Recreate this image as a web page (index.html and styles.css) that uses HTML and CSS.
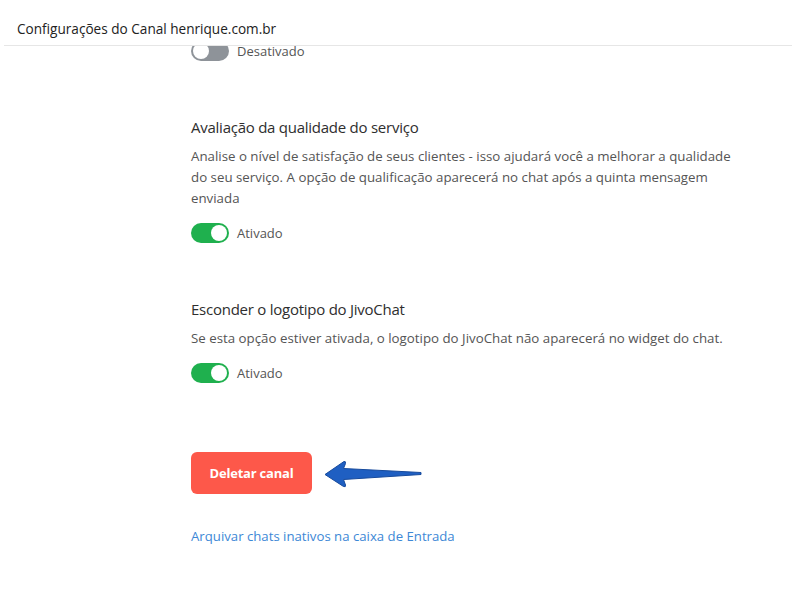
FILE: index.html
```html
<!DOCTYPE html>
<html lang="pt-BR">
<head>
<meta charset="utf-8">
<title>Configurações do Canal</title>
<link rel="stylesheet" href="styles.css">
</head>
<body>
<header class="topbar">
  <h1 class="topbar-title">Configurações do Canal henrique.com.br</h1>
</header>
<main class="content">
  <div class="toggle-row">
    <span class="switch switch-off"><span class="knob"></span></span>
    <span class="toggle-label">Desativado</span>
  </div>

  <section class="setting">
    <h2 class="setting-title">Avaliação da qualidade do serviço</h2>
    <p class="setting-desc">Analise o nível de satisfação de seus clientes - isso ajudará você a melhorar a qualidade do seu serviço. A opção de qualificação aparecerá no chat após a quinta mensagem enviada</p>
    <div class="toggle-row">
      <span class="switch switch-on"><span class="knob"></span></span>
      <span class="toggle-label">Ativado</span>
    </div>
  </section>

  <section class="setting">
    <h2 class="setting-title">Esconder o logotipo do JivoChat</h2>
    <p class="setting-desc">Se esta opção estiver ativada, o logotipo do JivoChat não aparecerá no widget do chat.</p>
    <div class="toggle-row">
      <span class="switch switch-on"><span class="knob"></span></span>
      <span class="toggle-label">Ativado</span>
    </div>
  </section>

  <div class="danger-row">
    <button class="btn-delete" type="button">Deletar canal</button>
    <svg class="arrow" width="100" height="30" viewBox="0 0 100 30" aria-hidden="true">
      <path d="M1 14.5 L20 1.5 Q22 1 21.5 3.5 L19.5 8.5 L97 12.5 L97 14.5 L19.5 19.5 L21.5 25 Q22 27.5 19.5 26.5 Z" fill="#1f5fc2" stroke="#174a9c" stroke-width="1" stroke-linejoin="round"/>
    </svg>
  </div>

  <a class="archive-link" href="#">Arquivar chats inativos na caixa de Entrada</a>
</main>
</body>
</html>
```
FILE: styles.css
```css
* { box-sizing: border-box; }
html, body { margin: 0; padding: 0; background: #ffffff; }
body {
  font-family: "Open Sans", "Noto Sans", "Liberation Sans", sans-serif;
  color: #333;
  width: 801px;
  height: 594px;
  overflow: hidden;
}
.topbar {
  position: sticky;
  top: 0;
  z-index: 2;
  height: 46px;
  background: #fff;
  margin: 0 9px 0 4px;
  border-bottom: 1px solid #e6e6e6;
  padding: 20px 0 0 13px;
}
.topbar-title {
  margin: 0;
  font-size: 13.6px;
  font-weight: 400;
  line-height: 18px;
  color: #222;
}
.content {
  position: relative;
  z-index: 1;
  margin-top: -5px;
  padding-left: 191px;
  width: 741px;
}
.toggle-row {
  display: flex;
  align-items: center;
  gap: 8px;
  height: 20px;
}
.switch {
  width: 38px;
  height: 20px;
  border-radius: 10px;
  display: flex;
  align-items: center;
  padding: 2px;
}
.switch-on { background: #1fb04e; justify-content: flex-end; }
.switch-off { background: #8e9399; justify-content: flex-start; }
.knob {
  width: 16px;
  height: 16px;
  border-radius: 50%;
  background: #fff;
}
.toggle-label {
  font-size: 13px;
  color: #555;
  line-height: 20px;
}
.setting { margin-top: 56px; }
.setting-title {
  margin: 0;
  font-size: 15px;
  font-weight: 500;
  line-height: 20px;
  color: #2e2e2e;
  letter-spacing: -0.25px;
}
.setting-desc {
  margin: 9px 0 14px;
  font-size: 13.3px;
  line-height: 21px;
  color: #555;
}
.danger-row {
  margin-top: 69px;
  display: flex;
  align-items: center;
  gap: 12px;
}
.btn-delete {
  width: 121px;
  height: 42px;
  border: 0;
  border-radius: 6px;
  background: #fd584a;
  color: #fff;
  font-family: "Open Sans", sans-serif;
  font-weight: 700;
  font-size: 13px;
  letter-spacing: -0.2px;
}
.arrow { margin-top: 3px; }
.archive-link {
  display: block;
  margin-top: 32px;
  font-size: 13.2px;
  line-height: 20px;
  color: #3d88d6;
  text-decoration: none;
}
```
